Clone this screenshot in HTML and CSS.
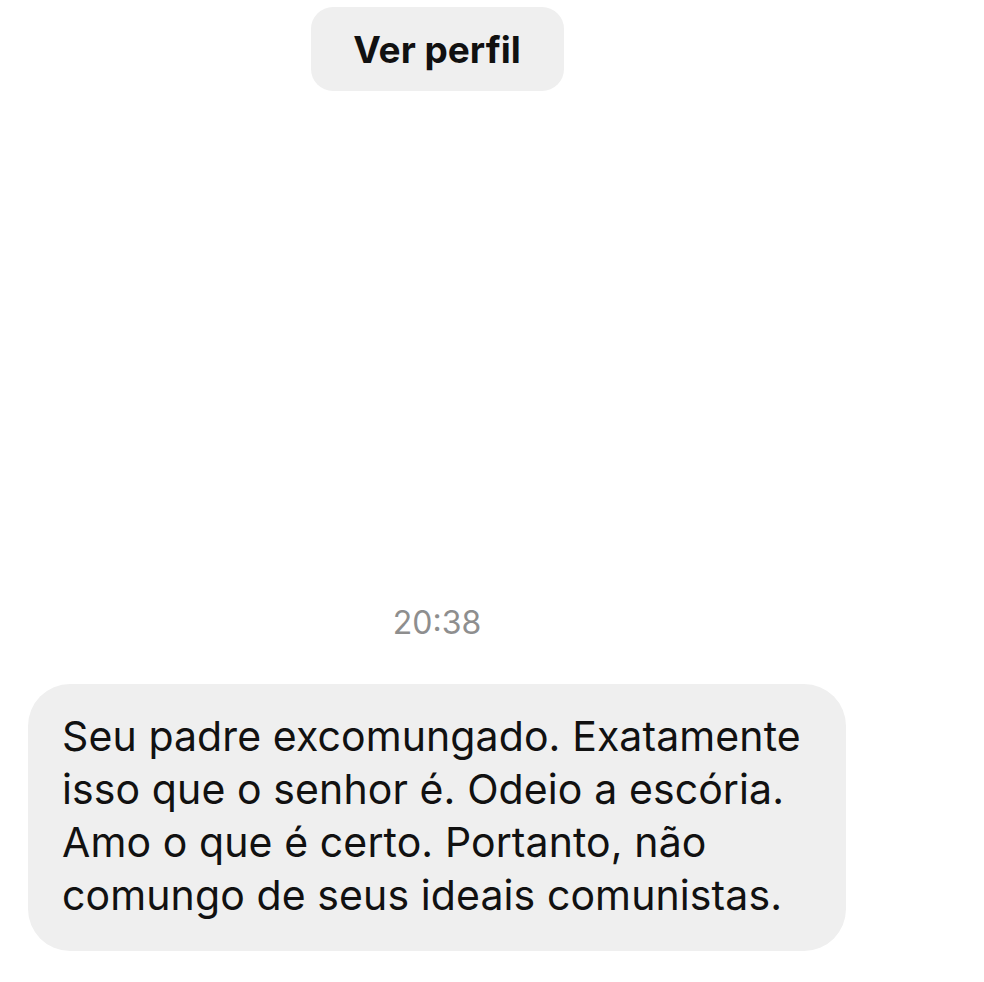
FILE: index.html
```html
<!DOCTYPE html>
<html lang="pt">
<head>
<meta charset="utf-8">
<title>Mensagem</title>
<link rel="stylesheet" href="styles.css">
</head>
<body>
<main class="thread">
  <div class="profile-row">
    <button class="profile-btn">Ver perfil</button>
  </div>
  <div class="timestamp">20:38</div>
  <div class="message-row">
    <p class="bubble">Seu padre excomungado. Exatamente<br>isso que o senhor é. Odeio a escória.<br>Amo o que é certo. Portanto, não<br>comungo de seus ideais comunistas.</p>
  </div>
</main>
</body>
</html>
```
FILE: styles.css
```css
* { box-sizing: border-box; }
html, body {
  margin: 0;
  padding: 0;
  background: #ffffff;
}
body {
  width: 984px;
  height: 982px;
  overflow: hidden;
  font-family: Inter, "Liberation Sans", Arial, sans-serif;
  color: #111111;
}
.thread {
  width: 874px;
  display: flex;
  flex-direction: column;
  padding-top: 7px;
}
.profile-row {
  display: flex;
  justify-content: center;
}
.profile-btn {
  width: 253px;
  height: 84px;
  border: none;
  border-radius: 22px;
  background: #efefef;
  font-family: inherit;
  font-size: 37px;
  font-weight: 700;
  color: #111111;
  padding: 0;
}
.timestamp {
  margin-top: 510px;
  text-align: center;
  font-size: 32px;
  line-height: 44px;
  color: #8e8e8e;
}
.message-row {
  margin-top: 39px;
  padding-left: 28px;
}
.bubble {
  margin: 0;
  width: 818px;
  height: 267px;
  background: #efefef;
  border-radius: 42px;
  padding: 26px 20px 0 34px;
  font-size: 41px;
  letter-spacing: 0.1px;
  line-height: 53px;
  color: #111111;
}
```
